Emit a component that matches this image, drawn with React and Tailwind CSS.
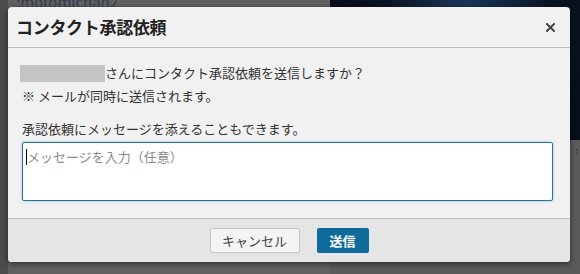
import React from "react";

const jp = { fontFamily: '"Noto Sans CJK JP", "Noto Sans", sans-serif' };

const App = () => {
  return (
    <div className="relative w-[580px] h-[274px] overflow-hidden bg-[#585858]" style={jp}>
      {/* 背景（モーダルの後ろ） */}
      <div className="grid grid-cols-[330px_1fr] h-full">
        <div className="flex h-full">
          <div className="w-[8px] bg-[#4c4c4c]"></div>
          <div className="flex-1 bg-[#616161]">
            <p className="text-[15px] leading-[15px] -mt-[6px] pl-[8px] text-[#33414f]">:motomichan2</p>
          </div>
        </div>
        <div className="flex flex-col h-full">
          <div className="h-[140px] bg-[radial-gradient(circle_at_55%_10%,#1c3a5e_0%,#0a1322_45%,#070c16_100%)]"></div>
          <div className="flex-1 bg-[#5b5b5b] flex justify-end pr-[2px] pt-[4px]">
            <span className="text-[9px] text-[#222]">:</span>
          </div>
        </div>
      </div>

      {/* ダイアログ */}
      <div className="absolute left-[8px] top-[7px] w-[562px] h-[255px] rounded-[4px] bg-[#f1f1f1] shadow-[0_2px_6px_rgba(0,0,0,0.5)] flex flex-col overflow-hidden">
        <div className="h-[41px] shrink-0 flex items-center justify-between pl-[8px] pr-[15px] border-b border-[#bcbcbc]">
          <h2 className="text-[17px] font-bold text-[#222] tracking-[-0.3px]">コンタクト承認依頼</h2>
          <button className="w-[10px] h-[10px] flex items-center justify-center">
            <svg width="9" height="9" viewBox="0 0 9 9">
              <path d="M1 1l7 7M8 1l-7 7" stroke="#444" strokeWidth="2" strokeLinecap="square" />
            </svg>
          </button>
        </div>

        <div className="flex-1 pt-[16px] px-[14px] text-[13px] text-[#333]">
          <div className="flex items-center h-[18px] -ml-[2px]">
            <span className="w-[85px] h-[17px] bg-[#c4c4c4]"></span>
            <span className="leading-[18px]">さんにコンタクト承認依頼を送信しますか？</span>
          </div>
          <p className="mt-[4px] leading-[20px]">※ メールが同時に送信されます。</p>
          <p className="mt-[13px] leading-[20px]">承認依頼にメッセージを添えることもできます。</p>
          <div className="mt-[3px] w-[531px] h-[59px] bg-white border border-[#2a7394] rounded-[2px] shadow-[0_0_3px_rgba(80,170,220,0.6)] flex items-start pt-[5px] pl-[3px]">
            <span className="w-px h-[16px] bg-black mt-[1px]"></span>
            <span className="text-[13px] leading-[18px] text-[#8a8a8a]">メッセージを入力（任意）</span>
          </div>
        </div>

        <div className="h-[44px] shrink-0 border-t border-[#bcbcbc] bg-[#e5e5e5] flex items-center justify-center gap-[17px]">
          <button className="w-[90px] h-[25px] bg-[#f4f4f4] border border-[#c6c6c6] rounded-[2px] text-[13px] text-[#444]">
            キャンセル
          </button>
          <button className="w-[52px] h-[25px] bg-[#116b9a] rounded-[2px] text-[13px] font-bold text-white">
            送信
          </button>
        </div>
      </div>
    </div>
  );
};

export default App;
